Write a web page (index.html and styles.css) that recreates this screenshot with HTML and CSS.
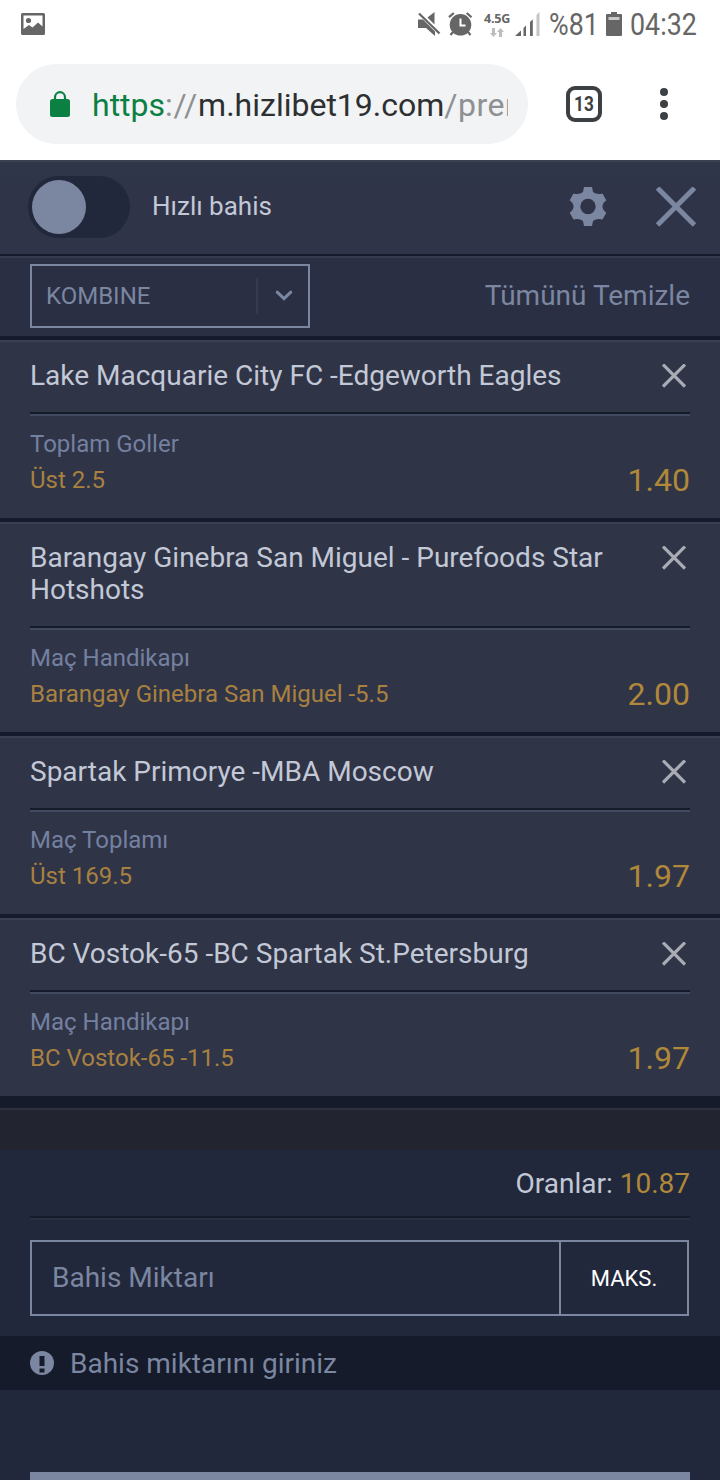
FILE: index.html
```html
<!DOCTYPE html>
<html lang="tr">
<head>
<meta charset="utf-8">
<title>Hızlı bahis</title>
<link rel="stylesheet" href="styles.css">
</head>
<body>
<div class="status">
  <svg class="st-photo" width="24" height="22" viewBox="0 0 24 22"><path fill="#666" fill-rule="evenodd" d="M1.500 0H22.500Q24 0 24 1.500V20.500Q24 22 22.500 22H1.500Q0 22 0 20.500V1.500Q0 0 1.500 0ZM2.500 2.500V16L8 12L11.500 14.500L17 9.500L21.500 13.500V2.500Z"/><circle cx="7.500" cy="7.500" r="2.600" fill="#666"/></svg>
  <svg class="st-mute" width="23" height="24" viewBox="0 0 23 24"><path fill="#666" d="M0 7.500H5L17 19.500V24L8 16H0ZM9.500 5.500L16.500 0V12.500Z"/><path d="M1 1.500L21.500 21.500" stroke="#666" stroke-width="2.300"/></svg>
  <svg class="st-alarm" width="24" height="24" viewBox="0 0 24 24"><circle cx="12.500" cy="12.800" r="10.800" fill="#666"/><path d="M1 5.200L5.800 1M23.500 5.200L18.700 1M5 20L2.500 23M20 20L22.500 23" stroke="#666" stroke-width="2.200"/><path d="M12.500 6.500V13.500H17.500" fill="none" stroke="#fff" stroke-width="2"/></svg>
  <div class="st-net"><span class="net-label">4.5G</span>
    <svg width="14" height="9" viewBox="0 0 14 9"><path fill="#bdbdbd" d="M2 0H5V5H7L3.500 9L0 5H2ZM9 9H12V4H14L10.500 0L7 4H9Z"/></svg></div>
  <svg class="st-signal" width="25" height="24" viewBox="0 0 25 24"><path fill="#666" d="M0 24L6 18.500V24ZM8.500 16L11 13.500V24H8.500ZM15 10L17.800 7.300V24H15Z"/><path fill="#c4c4c4" d="M21.500 3L24.500 0V24H21.500Z"/></svg>
  <span class="st-text st-pct"><span class="narrow">%81</span></span>
  <svg class="st-bat" width="16" height="24" viewBox="0 0 16 24"><path fill="#666" d="M5 0H11V2H15Q16 2 16 3V23Q16 24 15 24H1Q0 24 0 23V3Q0 2 1 2H5Z"/><path fill="#c8c8c8" d="M2.500 5H13.500V8H2.500Z"/></svg>
  <span class="st-text st-time"><span class="narrow">04:32</span></span>
</div>
<div class="toolbar">
  <div class="omnibox">
    <svg width="20" height="26" viewBox="0 0 20 26"><rect y="8" width="20" height="18" rx="2.500" fill="#0b8043"/><path d="M5 9V6.200A5 5 0 0 1 15 6.200V9" fill="none" stroke="#0b8043" stroke-width="2.200"/></svg>
    <div class="url"><span class="scheme">https</span><span class="sep">://</span><span class="host">m.hizlibet19.com</span><span class="path">/prem</span></div>
  </div>
  <div class="tabs"><span>13</span></div>
  <svg class="dots" width="8" height="32" viewBox="0 0 8 32"><g fill="#3c4043"><circle cx="4" cy="4" r="4"/><circle cx="4" cy="16" r="4"/><circle cx="4" cy="28" r="4"/></g></svg>
</div>

<div class="quick">
  <div class="toggle"><div class="knob"></div></div>
  <span class="quick-label">Hızlı bahis</span>
  <svg class="gear" width="38" height="40" viewBox="-19 -19.500 38 40"><path fill="#7b86a0" fill-rule="evenodd" d="M-4 -19.500H4L5 -14.500Q8.500 -11.500 14.500 -13L18.300 -6.200Q14.500 -3.500 14.500 0T18.300 6.200L14.500 13Q8.500 11.500 5 14.500L4 19.500H-4L-5 14.500Q-8.500 11.500 -14.500 13L-18.300 6.200Q-14.500 3.500 -14.500 0T-18.300 -6.200L-14.500 -13Q-8.500 -11.500 -5 -14.500ZM0 -7.700A7.700 7.700 0 1 0 0 7.700A7.700 7.700 0 1 0 0 -7.700Z"/></svg>
  <svg class="close" width="40" height="40" viewBox="0 0 40 40"><path d="M1.500 1L38.500 38M38.500 1L1.500 38" stroke="#7b86a0" stroke-width="5"/></svg>
</div>
<div class="mode">
  <div class="select"><span>KOMBINE</span><div class="arrow"><svg width="18" height="12" viewBox="0 0 18 12"><path d="M2.200 2.200L9 8.600L15.800 2.200" fill="none" stroke="#7b86a0" stroke-width="3" stroke-linecap="round"/></svg></div></div>
  <span class="clear">Tümünü Temizle</span>
</div>

<div class="bet">
  <div class="bet-head"><span class="title">Lake Macquarie City FC -Edgeworth Eagles</span><svg class="x" width="24" height="24" viewBox="0 0 24 24"><path d="M1 .5L23 22.500M23 .5L1 22.500"/></svg></div>
  <div class="bet-body"><div><div class="market">Toplam Goller</div><div class="pick">Üst 2.5</div></div><span class="odd">1.40</span></div>
</div>
<div class="bet">
  <div class="bet-head"><span class="title">Barangay Ginebra San Miguel - Purefoods Star Hotshots</span><svg class="x" width="24" height="24" viewBox="0 0 24 24"><path d="M1 .5L23 22.500M23 .5L1 22.500"/></svg></div>
  <div class="bet-body"><div><div class="market">Maç Handikapı</div><div class="pick">Barangay Ginebra San Miguel -5.5</div></div><span class="odd">2.00</span></div>
</div>
<div class="bet">
  <div class="bet-head"><span class="title">Spartak Primorye -MBA Moscow</span><svg class="x" width="24" height="24" viewBox="0 0 24 24"><path d="M1 .5L23 22.500M23 .5L1 22.500"/></svg></div>
  <div class="bet-body"><div><div class="market">Maç Toplamı</div><div class="pick">Üst 169.5</div></div><span class="odd">1.97</span></div>
</div>
<div class="bet last">
  <div class="bet-head"><span class="title">BC Vostok-65 -BC Spartak St.Petersburg</span><svg class="x" width="24" height="24" viewBox="0 0 24 24"><path d="M1 .5L23 22.500M23 .5L1 22.500"/></svg></div>
  <div class="bet-body"><div><div class="market">Maç Handikapı</div><div class="pick">BC Vostok-65 -11.5</div></div><span class="odd">1.97</span></div>
</div>

<div class="strip"></div>
<div class="total"><span>Oranlar: <b>10.87</b></span></div>
<div class="stake"><span class="stake-input">Bahis Miktarı</span><span class="max">MAKS.</span></div>
<div class="notice">
  <svg width="24" height="24" viewBox="0 0 24 24"><circle cx="12" cy="12" r="12" fill="#7b86a0"/><path fill="#151b2b" d="M9.500 5H14.500V15H9.500ZM9.500 17.500H14.500V21.500H9.500Z"/></svg>
  <span>Bahis miktarını giriniz</span>
</div>
<div class="submit"></div>
</body>
</html>
```
FILE: styles.css
```css
* { box-sizing: border-box; }
body {
  margin: 0;
  width: 720px;
  height: 1480px;
  overflow: hidden;
  background: #22283b;
  font-family: Roboto, "Liberation Sans", sans-serif;
  color: #c3c8d6;
}
svg { display: block; flex: none; }

.status { height: 48px; background: #fff; display: flex; padding: 0 0 0 21px; color: #666; }
.st-photo { margin-top: 13px; }
.st-mute { margin: 12px 0 0 373px; }
.st-alarm { margin: 12px 0 0 7px; }
.st-net { margin: 12px 0 0 11px; width: 28px; display: flex; flex-direction: column; align-items: center; }
.net-label { font: bold 12.5px/14px "Open Sans", sans-serif; letter-spacing: -0.2px; }
.st-net svg { margin-top: 2px; }
.st-signal { margin: 12px 0 0 4px; }
.st-bat { margin: 12px 0 0 7px; }
.st-text { font-size: 31px; line-height: 48px; white-space: nowrap; }
.narrow { display: inline-block; transform: scaleX(0.865); transform-origin: left; }
.st-pct { margin-left: 9px; width: 50px; margin-top: 1px; }
.st-time { margin: 1px 0 0 8px; width: 70px; }

.toolbar { height: 112px; background: #fff; display: flex; align-items: center; padding: 0 52px 0 16px; }
.omnibox { width: 512px; height: 80px; border-radius: 40px; background: #f1f3f4; display: flex; align-items: center; padding: 0 20px 0 34px; }
.url { margin-left: 22px; flex: 1; overflow: hidden; white-space: nowrap; font-size: 32px; line-height: 44px; color: #8e9091; padding-top: 2px; }
.scheme { color: #0b8043; }
.sep { letter-spacing: 0.8px; }
.host { color: #2d2f31; }
.path { letter-spacing: 0.5px; }
.tabs { margin-left: 38px; width: 36px; height: 36px; border: 4px solid #3c4043; border-radius: 9px; color: #3c4043; font-size: 20px; font-weight: 700; line-height: 29px; text-align: center; }
.tabs span { display: block; transform: scaleX(0.86); }
.dots { margin-left: auto; }

.quick { height: 96px; background: linear-gradient(#2f3749, #2f3449 30%); border-top: 2px solid #3a4151; border-bottom: 2px solid #151b2b; display: flex; padding: 14px 24px 0 28px; }
.toggle { width: 102px; height: 62px; border-radius: 31px; background: #22283b; padding: 4px; }
.knob { width: 54px; height: 54px; border-radius: 50%; background: #7b86a0; }
.quick-label { margin-left: 22px; font-size: 26px; line-height: 60px; }
.gear { margin: 11px 0 0 auto; }
.close { margin: 11px 0 0 49px; }

.mode { height: 84px; background: #2a2f43; border-top: 2px solid #353b4e; border-bottom: 4px solid #151b2b; display: flex; justify-content: space-between; padding: 6px 30px 0; color: #7b86a0; }
.select { width: 280px; height: 64px; border: 2px solid #7b86a0; display: flex; align-items: center; justify-content: space-between; padding-left: 14px; font-size: 24px; }
.arrow { width: 52px; height: 36px; border-left: 2px solid #353b4e; display: flex; align-items: center; padding-left: 17px; }
.clear { font-size: 28px; line-height: 63px; }

.bet { background: #2f3447; border-top: 2px solid #3a4051; border-bottom: 4px solid #151b2b; padding: 18px 30px 20px; }
.bet.last { border-bottom-width: 12px; }
.bet-head { display: flex; justify-content: space-between; align-items: flex-start; padding-bottom: 20px; border-bottom: 2px solid #151b2b; }
.title { width: 600px; font-size: 28px; line-height: 32px; }
.x { margin: 4px 4px 0 0; stroke: #a9acb5; stroke-width: 3.2; }
.bet-body { border-top: 2px solid #424a60; padding-top: 10px; display: flex; justify-content: space-between; align-items: flex-end; font-size: 24px; line-height: 36px; }
.market { color: #7480a0; }
.pick { color: #a88140; }
.odd { font-size: 32px; color: #b0883a; }

.strip { height: 42px; background: #22252f; border-top: 2px solid #2d303d; }
.total { height: 70px; margin: 0 30px; border-bottom: 2px solid #2a3042; box-shadow: inset 0 -2px #151b2b; text-align: right; font-size: 28px; line-height: 68px; }
.total b { font-weight: 400; color: #b0883a; }
.stake { margin: 20px 31px 20px 30px; height: 76px; border: 2px solid #7b86a0; display: flex; line-height: 72px; }
.stake-input { flex: 1; padding-left: 20px; font-size: 28px; color: #7b86a0; }
.max { width: 128px; border-left: 2px solid #7b86a0; color: #fff; font-size: 22px; line-height: 74px; height: 72px; text-align: center; }
.notice { height: 54px; background: #151b2b; display: flex; align-items: center; padding-left: 30px; gap: 16px; font-size: 28px; color: #7b86a0; }
.submit { margin: 82px 30px 0; height: 8px; background: #7b86a0; }
```
